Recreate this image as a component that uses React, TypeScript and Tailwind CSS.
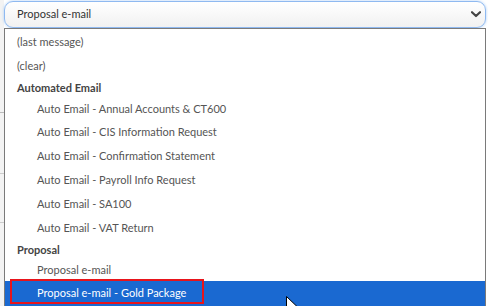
const autoItems = [
  { t: 'Auto Email - Annual Accounts & CT600', h: 'h-[22px]' },
  { t: 'Auto Email - CIS Information Request', h: 'h-[24px]' },
  { t: 'Auto Email - Confirmation Statement', h: 'h-[24px]' },
  { t: 'Auto Email - Payroll Info Request', h: 'h-[24px]' },
  { t: 'Auto Email - SA100', h: 'h-[24px]' },
  { t: 'Auto Email - VAT Return', h: 'h-[24px]' },
];

export default function App() {
  return (
    <div className="relative w-[488px] h-[306px] overflow-hidden bg-white text-[11px] text-[#555]" style={{ fontFamily: 'Lato, "Open Sans", sans-serif' }}>
      {/* page behind the dropdown */}
      <div className="absolute left-0 top-0 w-[4px] h-full bg-[#f3f3f3]">
        <div className="mt-[112px] h-px bg-[#bbb]" />
        <div className="mt-[60px] h-px bg-[#ccc]" />
        <div className="mt-[48px] h-px bg-[#ccc]" />
      </div>

      <div className="relative ml-[4px] mr-[2px]">
        <div className="flex items-center h-[27px] mt-px rounded-[9px] border border-[#8fb9f0] bg-gradient-to-b from-white to-[#f1f1f1] shadow-[0_0_3px_#a9cdf6] pl-[12px] pr-[4px] text-[#333]">
          <span>Proposal e-mail</span>
          <svg className="ml-auto" width="10" height="7" viewBox="0 0 10 7">
            <path d="M1 1.2 L5 5 L9 1.2" fill="none" stroke="#444" strokeWidth="2.2" strokeLinecap="round" strokeLinejoin="round" />
          </svg>
        </div>

        <div className="border border-[#7a7a7a] border-b-0 bg-white h-[279px]">
          <div className="pl-[12px] pt-px">
            <div className="h-[24px] flex items-center">(last message)</div>
            <div className="h-[24px] flex items-center">(clear)</div>
            <div className="h-[20px] flex items-center font-bold text-[#444]">Automated Email</div>
          </div>
          {autoItems.map((it) => (
            <div key={it.t} className={`${it.h} flex items-center pl-[32px]`}>{it.t}</div>
          ))}
          <div className="h-[20px] flex items-center pl-[12px] font-bold text-[#444]">Proposal</div>
          <div className="h-[21px] flex items-center pl-[32px]">Proposal e-mail</div>
          <div className="relative h-[25px] flex items-center pl-[32px] bg-[#1a69d1] text-white">
            Proposal e-mail - Gold Package
            <div className="absolute left-[5px] top-[-2px] w-[194px] h-[25px] border-2 border-[#e8141b]" />
          </div>
        </div>
      </div>

      <svg className="absolute left-[286px] top-[296px]" width="12" height="18" viewBox="0 0 12 18">
        <path d="M0.5 0.5 L0.5 15 L4 11.5 L6.5 17 L8.5 16 L6 10.5 L11 10.5 Z" fill="white" stroke="black" strokeWidth="1" />
      </svg>
    </div>
  );
}
